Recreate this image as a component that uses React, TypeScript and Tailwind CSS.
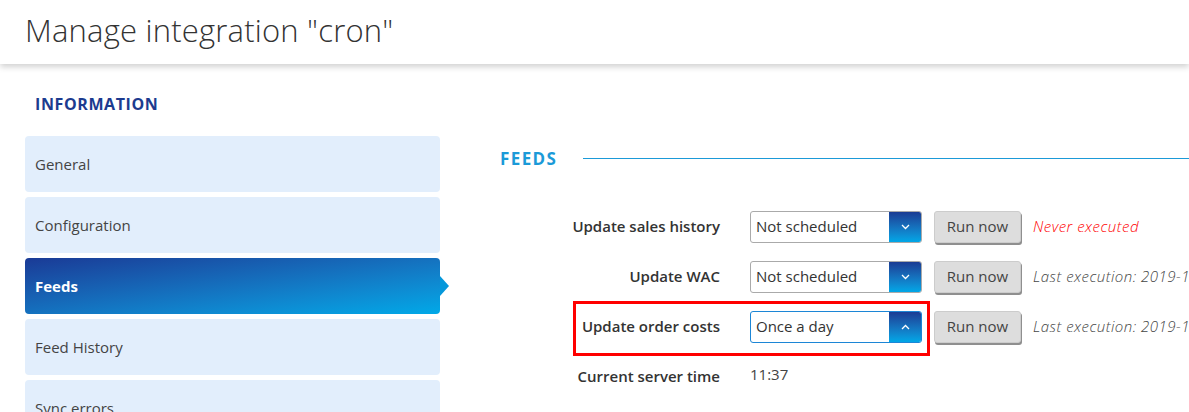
import React from "react"

const font = { fontFamily: '"Open Sans", "Noto Sans", Arial, sans-serif' }

const menu = ["General", "Configuration", "Feeds", "Feed History", "Sync errors"]

function Select({ value, open }: { value: string; open?: boolean }) {
  return (
    <div
      className={`flex h-[32px] w-[172px] overflow-hidden rounded-[3px] border bg-white ${
        open ? "border-[#1c86d6]" : "border-[#aaaaaa]"
      }`}
    >
      <div className="flex flex-1 items-center pl-[5px] text-[15px] text-[#333]">{value}</div>
      <div className="flex w-[32px] items-center justify-center bg-gradient-to-b from-[#1a3c94] to-[#00a7e7]">
        <svg width="9" height="6" viewBox="0 0 9 6" fill="none" stroke="white" strokeWidth="1.3">
          {open ? <path d="M1 5l3.5-3.5L8 5" /> : <path d="M1 1l3.5 3.5L8 1" />}
        </svg>
      </div>
    </div>
  )
}

function FeedRow({
  label,
  value,
  status,
  never,
  open,
}: {
  label: string
  value: string
  status: string
  never?: boolean
  open?: boolean
}) {
  return (
    <div className="relative flex h-[50px] items-center">
      {open && (
        <span className="pointer-events-none absolute left-[73px] top-[-1px] h-[55px] w-[357px] border-[3px] border-[#ff0000]" />
      )}
      <div className="w-[220px] shrink-0 text-right text-[15px] font-semibold text-[#333]">{label}</div>
      <div className="ml-[30px] shrink-0">
        <Select value={value} open={open} />
      </div>
      <button className="ml-[12px] h-[32px] w-[87px] shrink-0 rounded-[3px] border border-[#cccccc] bg-[#dddddd] text-[15px] text-[#444] shadow-[1px_2px_0_#8f8f8f]">
        Run now
      </button>
      <span
        className={`ml-[12px] whitespace-nowrap text-[15px] font-light italic tracking-[0.5px] ${
          never ? "text-[#ff0000]" : "text-[#444]"
        }`}
      >
        {status}
      </span>
    </div>
  )
}

export default function App() {
  return (
    <div className="h-[412px] w-[1189px] overflow-hidden bg-white" style={font}>
      <header className="relative z-10 flex h-[64px] items-center bg-white px-[25px] pb-[4px] shadow-[0_3px_6px_rgba(0,0,0,0.18)]">
        <h1 className="text-[31px] font-light tracking-[0.2px] text-[#333]">Manage integration "cron"</h1>
      </header>
      <div className="flex">
        <aside className="ml-[25px] w-[415px] shrink-0">
          <h2 className="pl-[10px] pt-[28px] text-[16px] font-bold tracking-[0.6px] text-[#1c3b8f]">INFORMATION</h2>
          <nav className="mt-[20px] flex flex-col gap-[5px]">
            {menu.map((item) =>
              item === "Feeds" ? (
                <div key={item} className="relative">
                  <div className="flex h-[56px] items-center rounded-[4px] bg-gradient-to-br from-[#1a3a96] to-[#00a9e8] pl-[10px] text-[15px] font-bold text-white">
                    {item}
                  </div>
                  <span className="absolute right-[-9px] top-[18px] h-0 w-0 border-y-[10px] border-l-[9px] border-y-transparent border-l-[#0598db]" />
                </div>
              ) : (
                <div
                  key={item}
                  className="flex h-[56px] items-center rounded-[4px] bg-[#e2eefc] pl-[10px] text-[15px] text-[#444]"
                >
                  {item}
                </div>
              )
            )}
          </nav>
        </aside>
        <main className="ml-[60px] min-w-0 flex-1">
          <div className="mt-[82px] flex items-center">
            <h2 className="text-[17px] font-bold tracking-[1.4px] text-[#1b9ad8]">FEEDS</h2>
            <div className="ml-[26px] h-px flex-1 bg-[#1b9ad8]" />
          </div>
          <div className="mt-[30px]">
            <FeedRow label="Update sales history" value="Not scheduled" status="Never executed" never />
            <FeedRow label="Update WAC" value="Not scheduled" status="Last execution: 2019-11-05 02:00:12" />
            <FeedRow label="Update order costs" value="Once a day" status="Last execution: 2019-11-05 02:00:14" open />
            <div className="flex h-[50px] items-center">
              <div className="w-[220px] shrink-0 text-right text-[15px] font-semibold text-[#333]">
                Current server time
              </div>
              <div className="-mt-[4px] ml-[30px] text-[15px] text-[#444]">11:37</div>
            </div>
          </div>
        </main>
      </div>
    </div>
  )
}
